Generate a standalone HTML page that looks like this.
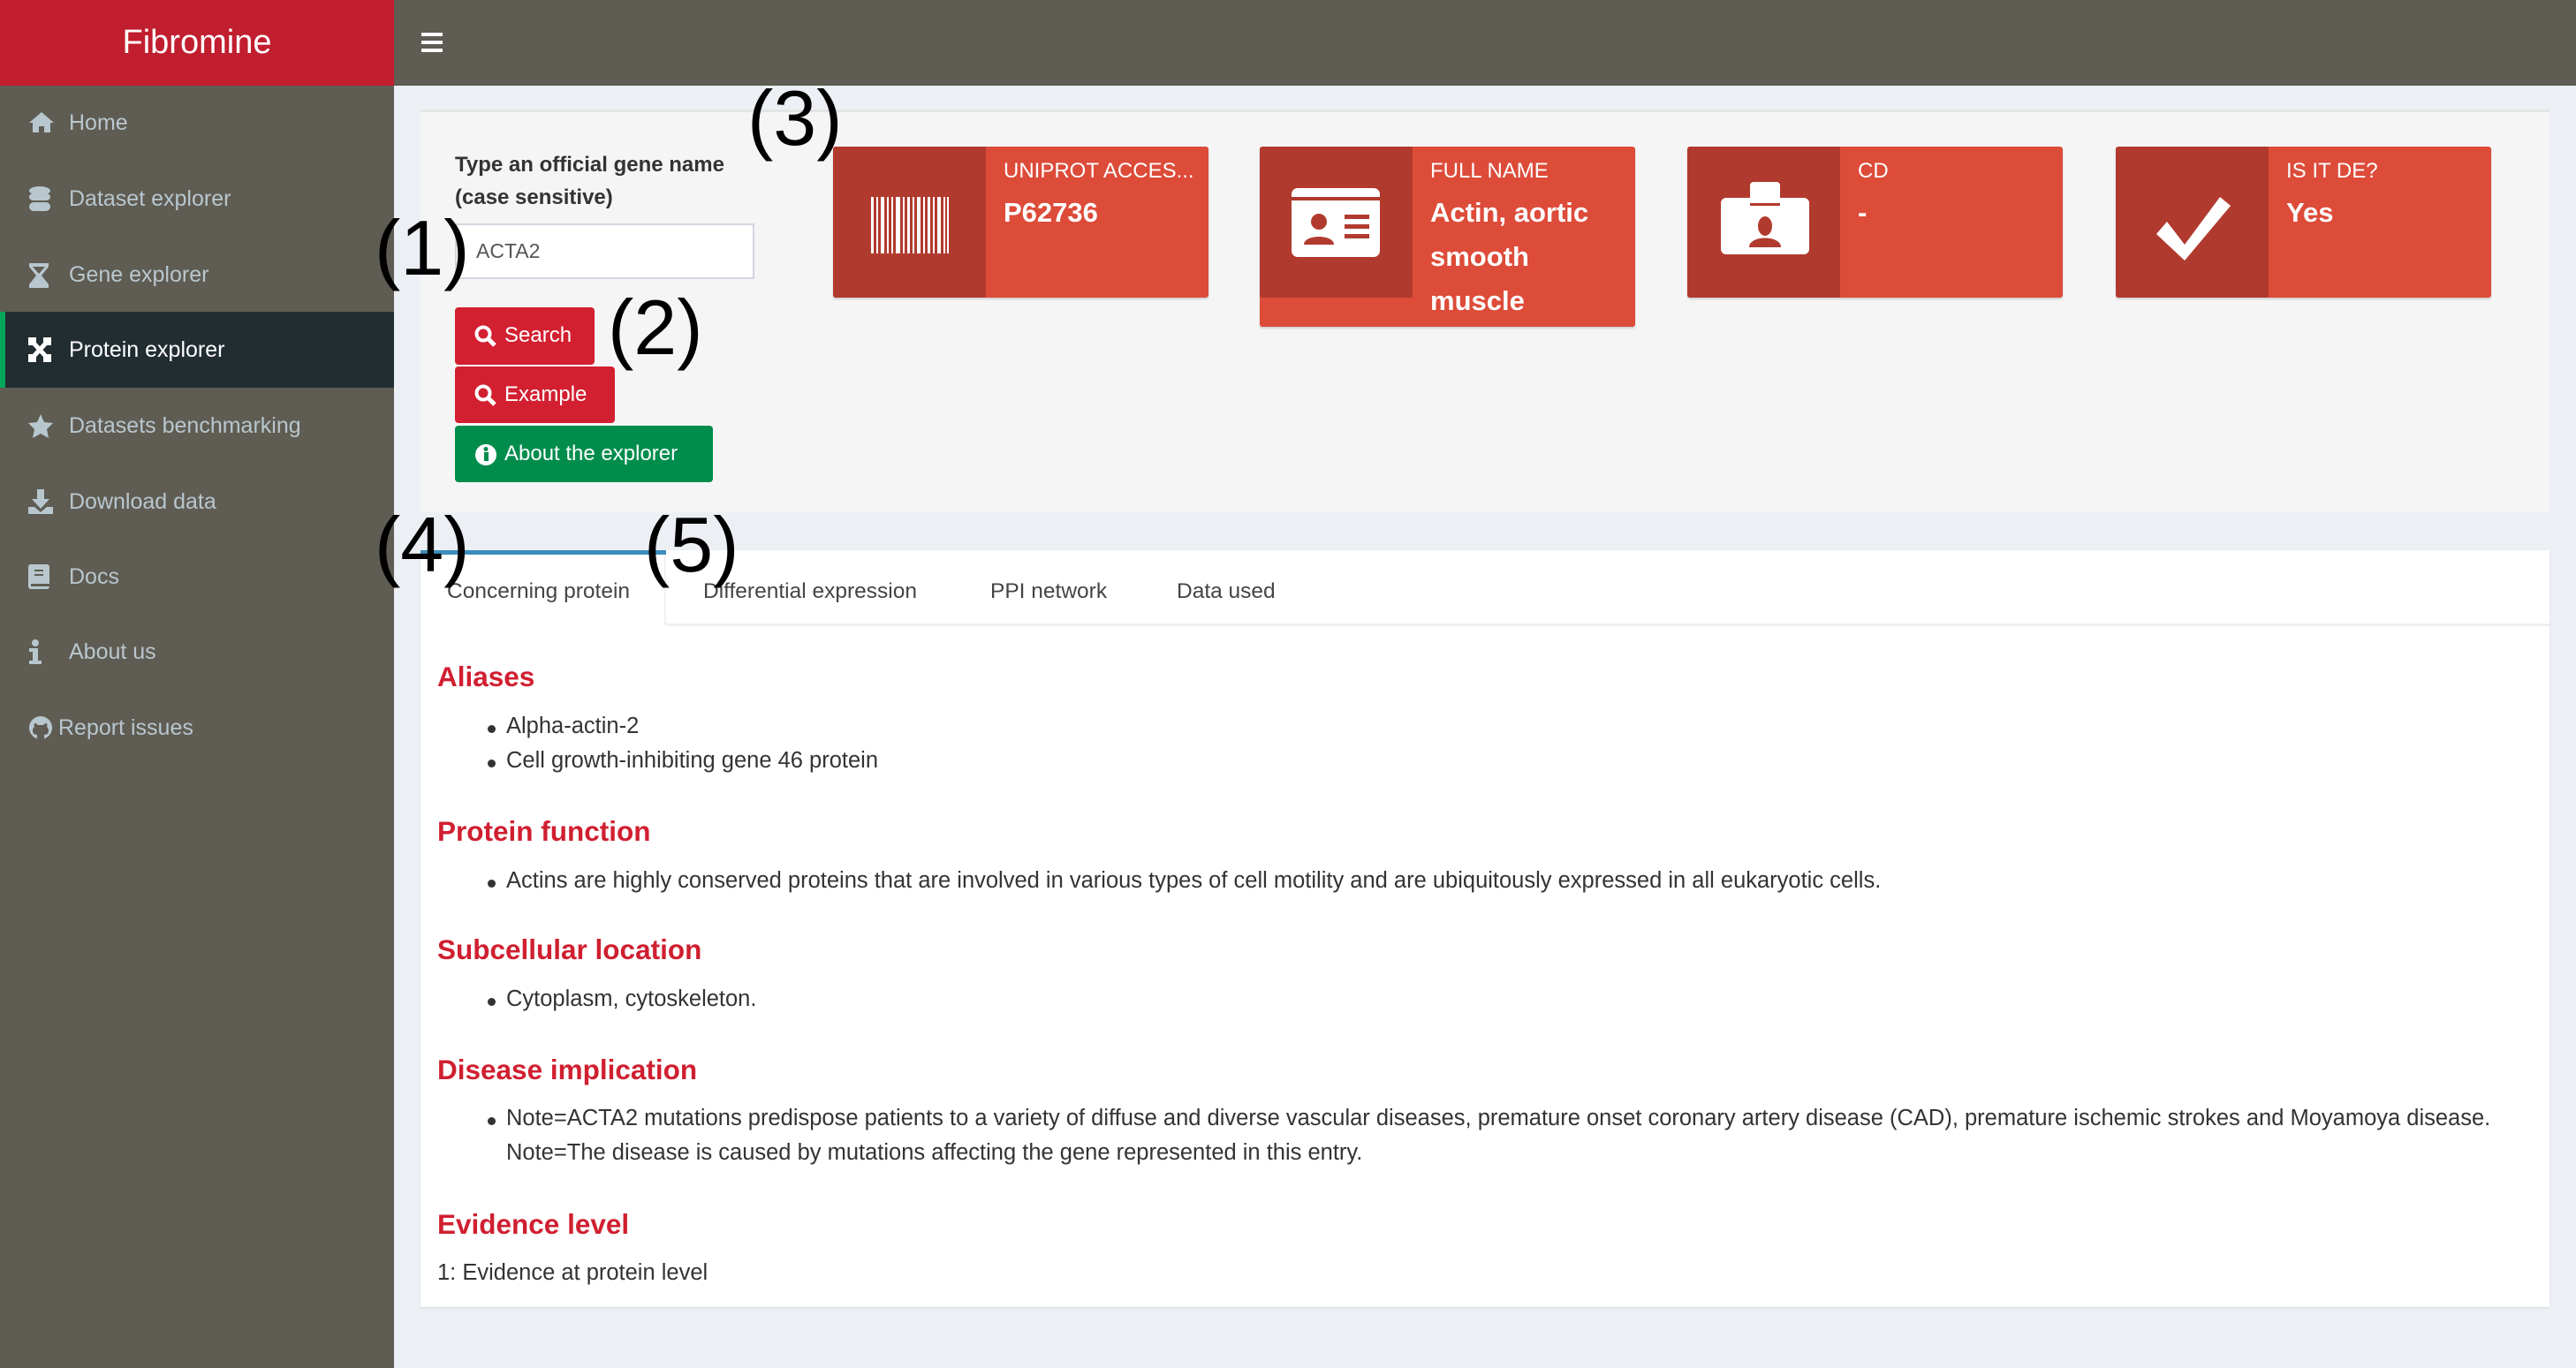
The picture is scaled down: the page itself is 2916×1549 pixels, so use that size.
<!DOCTYPE html>
<html><head><meta charset="utf-8"><style>
*{margin:0;padding:0;box-sizing:border-box}
body{width:2916px;height:1549px;position:relative;background:#ecf0f5;font-family:"Liberation Sans",sans-serif;overflow:hidden}
.a{position:absolute}
.side{left:0;top:97px;width:446px;height:1452px;background:#5f5c53}
.logo{left:0;top:0;width:446px;height:97px;background:#c11e2f;color:#fff;font-size:38px;text-align:center;line-height:97px}
.top{left:446px;top:0;width:2470px;height:97px;background:#5f5c53}
.item{position:absolute;left:0;width:446px;height:86px;color:#b8c7ce;font-size:25px;line-height:86px}
.item svg{position:absolute;left:32px;top:29px}
.item span{position:absolute;left:78px}
.act{background:#222d32;color:#fff;border-left:6px solid #00a65a}
.box{background:#f5f5f5;border-top:3px solid #e4e4e4}
.btn{position:absolute;color:#fff;font-size:24px;border-radius:4px;line-height:64px;padding-left:56px}
.btn svg{position:absolute;left:22px;top:20px}
.ib{position:absolute;top:166px;width:425px;background:#dd4b39;border-radius:3px;box-shadow:0 2px 2px rgba(0,0,0,.15)}
.ib .ic{position:absolute;left:0;top:0;width:173px;height:171px;background:#b13a2e;border-radius:3px 0 0 3px}
.ib .t{position:absolute;left:193px;top:14px;color:#fff;font-size:24px}
.ib .v{position:absolute;left:193px;top:50px;color:#fff;font-size:31px;font-weight:bold;line-height:50px}
.ann{position:absolute;font-size:88px;color:#000;line-height:1}
.h{position:absolute;left:495px;color:#d01f30;font-size:31.5px;font-weight:bold}
.li{position:absolute;left:552px;font-size:25.5px;color:#333}
.li:before{content:"";position:absolute;left:0;top:13px;width:9px;height:9px;border-radius:50%;background:#333}
.li span{margin-left:21px}
.tab{position:absolute;top:656px;font-size:24.5px;color:#444}
</style></head><body>
<div class="a logo">Fibromine</div>
<div class="a top"><svg class="a" style="left:31px;top:37px" width="24" height="22"><rect y="0" width="24" height="4" fill="#fff"/><rect y="9" width="24" height="4" fill="#fff"/><rect y="18" width="24" height="4" fill="#fff"/></svg></div>
<div class="a side">
<div class="item" style="top:-1px"><svg width="30" height="26"><path d="M15 2L1 14h4v11h7v-7h6v7h7V14h4L15 2z" fill="#b8c7ce"/></svg><span>Home</span></div>
<div class="item" style="top:85px"><svg width="26" height="30"><ellipse cx="13" cy="5" rx="12" ry="5" fill="#b8c7ce"/><rect x="1" y="8" width="24" height="8" rx="5" fill="#b8c7ce"/><rect x="1" y="18" width="24" height="10" rx="5" fill="#b8c7ce"/></svg><span>Dataset explorer</span></div>
<div class="item" style="top:171px"><svg width="24" height="30"><path d="M1 1h22v4l-8 10 8 10v4H1v-4l8-10-8-10z" fill="#b8c7ce"/><path d="M5 5h14l-7 8z" fill="#5f5c53"/></svg><span>Gene explorer</span></div>
<div class="item act" style="top:256px;height:86px"><svg width="26" height="28" style="left:26px"><path d="M2 2l22 24M24 2L2 26" stroke="#fff" stroke-width="5"/><rect x="0" y="0" width="9" height="9" fill="#fff"/><rect x="17" y="0" width="9" height="9" fill="#fff"/><rect x="0" y="19" width="9" height="9" fill="#fff"/><rect x="17" y="19" width="9" height="9" fill="#fff"/></svg><span style="left:72px">Protein explorer</span></div>
<div class="item" style="top:342px"><svg width="28" height="28"><path d="M14 1l4 9 10 1-7 7 2 10-9-5-9 5 2-10-7-7 10-1z" fill="#b8c7ce"/></svg><span>Datasets benchmarking</span></div>
<div class="item" style="top:428px"><svg width="28" height="28"><path d="M10 0h8v11h6l-10 11L4 11h6z M0 20h7l7 6 7-6h7v8H0z" fill="#b8c7ce"/></svg><span>Download data</span></div>
<div class="item" style="top:513px"><svg width="24" height="28"><rect width="24" height="28" rx="3" fill="#b8c7ce"/><rect x="7" y="6" width="10" height="2" fill="#5f5c53"/><rect x="7" y="11" width="10" height="2" fill="#5f5c53"/><rect x="3" y="22" width="21" height="3" fill="#5f5c53"/></svg><span>Docs</span></div>
<div class="item" style="top:598px"><svg width="16" height="28"><circle cx="8" cy="4" r="4" fill="#b8c7ce"/><path d="M1 10h10v14h4v4H1v-4h4V14H1z" fill="#b8c7ce"/></svg><span>About us</span></div>
<div class="item" style="top:684px"><svg width="28" height="28"><circle cx="14" cy="14" r="13" fill="#b8c7ce"/><path d="M10 27v-5c-4 0-5-2-5-5 0-2 1-3 2-4-1-2 0-4 0-4 2 0 3 1 4 2h6c1-1 2-2 4-2 0 0 1 2 0 4 1 1 2 2 2 4 0 3-1 5-5 5v5z" fill="#5f5c53"/></svg><span style="left:66px">Report issues</span></div>
</div>
<div class="a box" style="left:476px;top:124px;width:2410px;height:456px"></div>
<div class="a" style="left:515px;top:168px;font-size:24px;font-weight:bold;color:#333;line-height:37px">Type an official gene name<br>(case sensitive)</div>
<div class="a" style="left:515px;top:253px;width:339px;height:63px;background:#fff;border:2px solid #d2d6de;font-size:23px;color:#555;line-height:59px;padding-left:22px">ACTA2</div>
<div class="btn" style="left:515px;top:348px;width:158px;height:65px;background:#d32031"><svg width="26" height="26"><circle cx="10" cy="10" r="7.5" stroke="#fff" stroke-width="4" fill="none"/><path d="M15 15l8 8" stroke="#fff" stroke-width="5"/></svg>Search</div>
<div class="btn" style="left:515px;top:415px;width:181px;height:64px;background:#d32031"><svg width="26" height="26"><circle cx="10" cy="10" r="7.5" stroke="#fff" stroke-width="4" fill="none"/><path d="M15 15l8 8" stroke="#fff" stroke-width="5"/></svg>Example</div>
<div class="btn" style="left:515px;top:482px;width:292px;height:64px;background:#008d4c"><svg width="26" height="26"><circle cx="13" cy="13" r="12" fill="#fff"/><rect x="11" y="10" width="5" height="10" fill="#008d4c"/><circle cx="13" cy="6.5" r="2.5" fill="#008d4c"/></svg>About the explorer</div>

<div class="ib" style="left:943px;height:171px"><div class="ic"><svg class="a" style="left:43px;top:57px" width="88" height="64"><g fill="#fff"><rect x="0" width="3" height="64"/><rect x="6" width="2" height="64"/><rect x="11" width="4" height="64"/><rect x="18" width="2" height="64"/><rect x="23" width="2" height="64"/><rect x="28" width="5" height="64"/><rect x="36" width="2" height="64"/><rect x="41" width="3" height="64"/><rect x="47" width="2" height="64"/><rect x="52" width="4" height="64"/><rect x="59" width="2" height="64"/><rect x="64" width="3" height="64"/><rect x="70" width="2" height="64"/><rect x="75" width="4" height="64"/><rect x="82" width="2" height="64"/><rect x="86" width="2" height="64"/></g></svg></div><div class="t">UNIPROT ACCES...</div><div class="v">P62736</div></div>
<div class="ib" style="left:1426px;height:204px"><div class="ic"><svg class="a" style="left:36px;top:47px" width="100" height="78"><rect width="100" height="78" rx="7" fill="#fff"/><rect y="10" width="100" height="4" fill="#b13a2e"/><circle cx="31" cy="38" r="9" fill="#b13a2e"/><path d="M14 64c0-12 34-12 34 0z" fill="#b13a2e"/><rect x="60" y="30" width="28" height="5" fill="#b13a2e"/><rect x="60" y="41" width="28" height="5" fill="#b13a2e"/><rect x="60" y="52" width="28" height="5" fill="#b13a2e"/></svg></div><div class="t">FULL NAME</div><div class="v">Actin, aortic<br>smooth<br>muscle</div></div>
<div class="ib" style="left:1910px;height:171px"><div class="ic"><svg class="a" style="left:38px;top:40px" width="100" height="82"><rect x="0" y="18" width="100" height="64" rx="6" fill="#fff"/><rect x="33" y="0" width="34" height="40" rx="4" fill="#fff"/><rect x="33" y="24" width="34" height="3" fill="#b13a2e"/><ellipse cx="50" cy="50" rx="8" ry="11" fill="#b13a2e"/><path d="M32 74c0-14 36-14 36 0z" fill="#b13a2e"/></svg></div><div class="t">CD</div><div class="v">-</div></div>
<div class="ib" style="left:2395px;height:171px"><div class="ic"><svg class="a" style="left:42px;top:55px" width="90" height="76"><path d="M4 44l12-14 20 26L76 2l12 10-52 62z" fill="#fff"/></svg></div><div class="t">IS IT DE?</div><div class="v">Yes</div></div>

<div class="a" style="left:476px;top:623px;width:2410px;height:857px;background:#fff;box-shadow:0 1px 2px rgba(0,0,0,.1)"></div>
<div class="a" style="left:476px;top:623px;width:278px;height:5px;background:#3c8dbc"></div>
<div class="a" style="left:754px;top:706px;width:2132px;height:3px;background:#f0f0f0"></div>
<div class="a" style="left:752px;top:628px;width:2px;height:80px;background:#f0f0f0"></div>
<div class="tab" style="left:506px">Concerning protein</div>
<div class="tab" style="left:796px">Differential expression</div>
<div class="tab" style="left:1121px">PPI network</div>
<div class="tab" style="left:1332px">Data used</div>

<div class="h" style="top:748px">Aliases</div>
<div class="li" style="top:808px"><span>Alpha-actin-2</span></div>
<div class="li" style="top:847px"><span>Cell growth-inhibiting gene 46 protein</span></div>
<div class="h" style="top:923px">Protein function</div>
<div class="li" style="top:983px"><span>Actins are highly conserved proteins that are involved in various types of cell motility and are ubiquitously expressed in all eukaryotic cells.</span></div>
<div class="h" style="top:1057px">Subcellular location</div>
<div class="li" style="top:1117px"><span>Cytoplasm, cytoskeleton.</span></div>
<div class="h" style="top:1193px">Disease implication</div>
<div class="li" style="top:1252px"><span>Note=ACTA2 mutations predispose patients to a variety of diffuse and diverse vascular diseases, premature onset coronary artery disease (CAD), premature ischemic strokes and Moyamoya disease.</span></div>
<div class="a" style="left:573px;top:1291px;font-size:25.5px;color:#333">Note=The disease is caused by mutations affecting the gene represented in this entry.</div>
<div class="h" style="top:1368px">Evidence level</div>
<div class="a" style="left:495px;top:1427px;font-size:25.5px;color:#333">1: Evidence at protein level</div>

<div class="ann" style="left:846px;top:90px">(3)</div>
<div class="ann" style="left:424px;top:237px">(1)</div>
<div class="ann" style="left:688px;top:327px">(2)</div>
<div class="ann" style="left:424px;top:573px">(4)</div>
<div class="ann" style="left:729px;top:573px">(5)</div>
</body></html>
